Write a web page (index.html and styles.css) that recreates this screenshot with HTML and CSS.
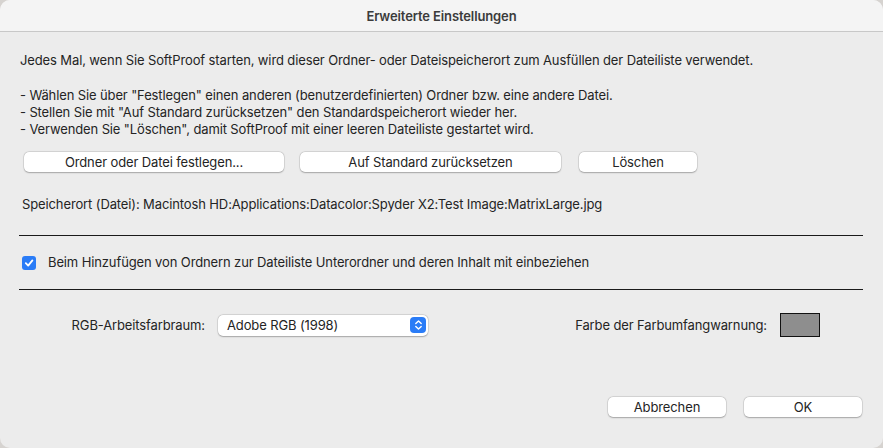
FILE: index.html
```html
<!DOCTYPE html>
<html>
<head>
<meta charset="utf-8">
<link rel="stylesheet" href="styles.css">
</head>
<body>
<div class="window">
  <div class="titlebar">Erweiterte Einstellungen</div>
  <div class="content">
    <p class="intro">Jedes Mal, wenn Sie SoftProof starten, wird dieser Ordner- oder Dateispeicherort zum Ausfüllen der Dateiliste verwendet.</p>
    <div class="bullets">
      <div>- Wählen Sie über "Festlegen" einen anderen (benutzerdefinierten) Ordner bzw. eine andere Datei.</div>
      <div>- Stellen Sie mit "Auf Standard zurücksetzen" den Standardspeicherort wieder her.</div>
      <div>- Verwenden Sie "Löschen", damit SoftProof mit einer leeren Dateiliste gestartet wird.</div>
    </div>
    <div class="btnrow">
      <button class="btn w260">Ordner oder Datei festlegen...</button>
      <button class="btn w261">Auf Standard zurücksetzen</button>
      <button class="btn w118">Löschen</button>
    </div>
    <div class="location">Speicherort (Datei): Macintosh HD:Applications:Datacolor:Spyder X2:Test Image:MatrixLarge.jpg</div>
    <hr class="sep">
    <label class="check">
      <span class="box"><svg width="10" height="10" viewBox="0 0 10 10"><path d="M1.8 5.2 L4.2 7.6 L8.4 2.4" fill="none" stroke="#fff" stroke-width="1.8" stroke-linecap="round" stroke-linejoin="round"/></svg></span>
      Beim Hinzufügen von Ordnern zur Dateiliste Unterordner und deren Inhalt mit einbeziehen
    </label>
    <hr class="sep sep2">
    <div class="settings">
      <div class="field">
        <span class="lbl">RGB-Arbeitsfarbraum:</span>
        <div class="select">
          <span>Adobe RGB (1998)</span>
          <span class="arrows"><svg width="9" height="12" viewBox="0 0 9 12"><path d="M1.8 4.6 L4.5 2 L7.2 4.6 M1.8 7.4 L4.5 10 L7.2 7.4" fill="none" stroke="#fff" stroke-width="1.4" stroke-linecap="round" stroke-linejoin="round"/></svg></span>
        </div>
      </div>
      <div class="field field2">
        <span class="lbl">Farbe der Farbumfangwarnung:</span>
        <span class="swatch"></span>
      </div>
    </div>
    <div class="footer">
      <button class="btn w118">Abbrechen</button>
      <button class="btn w118">OK</button>
    </div>
  </div>
</div>
</body>
</html>
```
FILE: styles.css
```css
html, body {
  margin: 0;
  padding: 0;
}
body {
  width: 883px;
  height: 448px;
  background: #d6d3d0;
  font-family: "Inter", "Liberation Sans", sans-serif;
  font-size: 13px;
  letter-spacing: -0.12px;
  color: #242424;
  overflow: hidden;
}
.window {
  width: 883px;
  height: 448px;
  background: #ececec;
  border-radius: 10px;
  overflow: hidden;
  display: flex;
  flex-direction: column;
}
.titlebar {
  height: 32px;
  background: #f4f4f4;
  border-bottom: 1px solid #c8c8c8;
  box-sizing: border-box;
  display: flex;
  align-items: center;
  justify-content: center;
  font-weight: 600;
  color: #3b3b3b;
  font-size: 13px;
}
.content {
  padding: 20px 20px 0 20px;
  flex: 1;
  display: flex;
  flex-direction: column;
}
.intro {
  margin: 0;
  line-height: 17px;
}
.bullets {
  margin-top: 18px;
  line-height: 17px;
}
.btnrow {
  display: flex;
  margin-top: 14px;
  padding-left: 4px;
  gap: 16px;
}
.btnrow .w261 { margin-right: 2px; }
.btn {
  font-family: inherit;
  font-size: 13px;
  letter-spacing: -0.12px;
  color: #242424;
  height: 20px;
  background: #fff;
  border: none;
  border-radius: 5px;
  box-shadow: 0 0 0 0.5px rgba(0,0,0,0.12), 0 0.5px 1.5px rgba(0,0,0,0.25);
  padding: 0;
  line-height: 20px;
}
.w260 { width: 260px; }
.w261 { width: 261px; }
.w118 { width: 118px; }
.location {
  margin-top: 24px;
  padding-left: 2px;
  line-height: 17px;
}
.sep {
  margin: 22px 0 0 -1px;
  width: 844px;
  border: none;
  border-top: 1px solid #1a1a1a;
  height: 0;
}
.sep2 { margin-top: 18px; }
.check {
  display: flex;
  align-items: center;
  margin-top: 18px;
  padding-left: 2px;
  gap: 12px;
  line-height: 17px;
}
.box {
  width: 14px;
  height: 14px;
  border-radius: 3px;
  background: #2a7cf7;
  display: flex;
  align-items: center;
  justify-content: center;
}
.settings {
  display: flex;
  margin-top: 23px;
  align-items: center;
}
.field {
  display: flex;
  align-items: center;
}
.field .lbl {
  width: 185px;
  text-align: right;
  margin-right: 13px;
}
.select {
  width: 210px;
  height: 21px;
  background: #fff;
  border-radius: 5px;
  box-shadow: 0 0 0 0.5px rgba(0,0,0,0.12), 0 0.5px 1.5px rgba(0,0,0,0.25);
  display: flex;
  align-items: center;
  justify-content: space-between;
  padding: 0 2px 0 9px;
  box-sizing: border-box;
}
.arrows {
  width: 16px;
  height: 16px;
  border-radius: 4px;
  background: #2a7cf7;
  display: flex;
  align-items: center;
  justify-content: center;
}
.field2 {
  margin-left: auto;
  margin-right: 43px;
}
.field2 .lbl {
  width: auto;
  margin-right: 13px;
}
.swatch {
  width: 38px;
  height: 22px;
  background: #8e8e8e;
  border: 1px solid #111;
}
.footer {
  display: flex;
  justify-content: flex-end;
  gap: 18px;
  margin-top: 60px;
  padding-right: 1px;
}
```
